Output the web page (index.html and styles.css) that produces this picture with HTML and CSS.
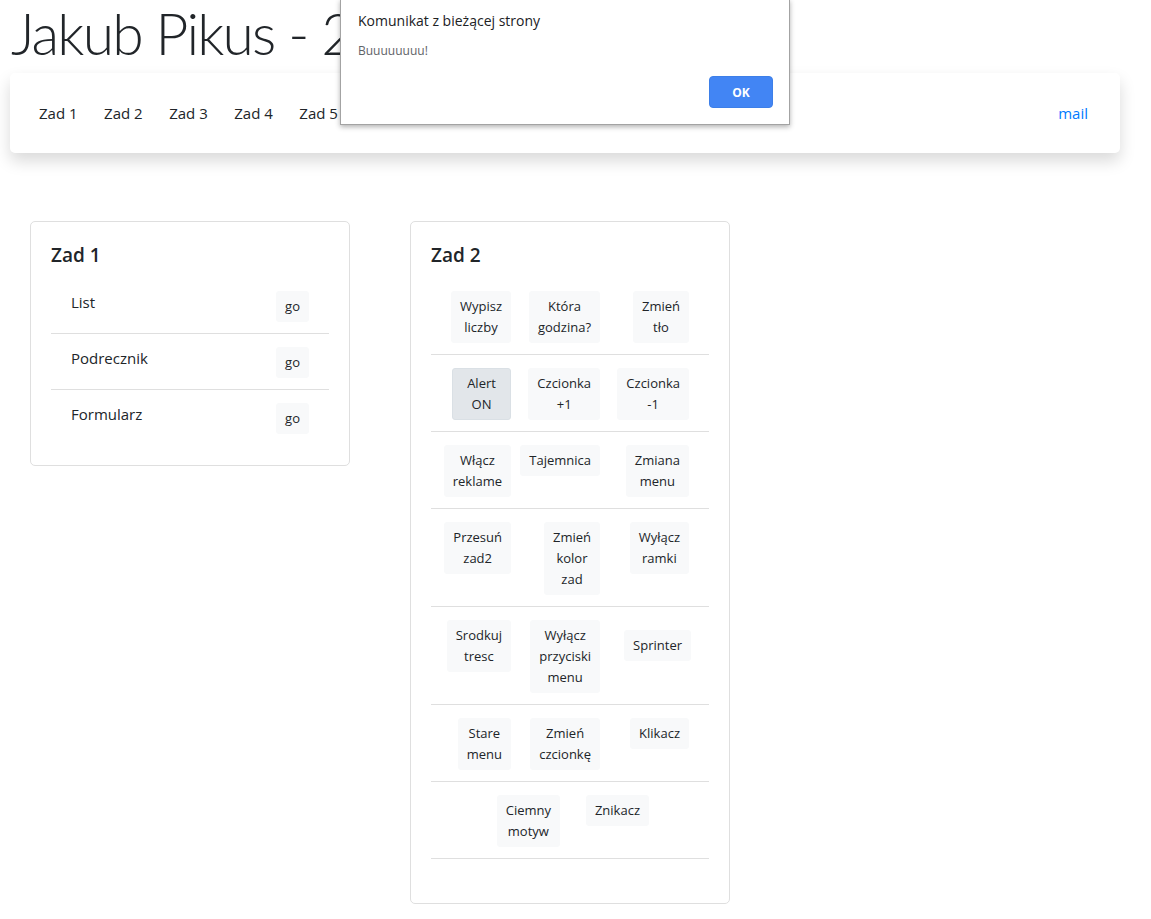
FILE: index.html
```html
<!DOCTYPE html>
<html lang="pl">
<head>
<meta charset="utf-8">
<title>Jakub Pikus</title>
<link rel="stylesheet" href="styles.css">
</head>
<body>
<div class="page">
  <h1 class="title">Jakub Pikus - 2020</h1>
  <nav class="navbar">
    <ul class="nav-list">
      <li><a class="nav-link" href="#">Zad 1</a></li>
      <li><a class="nav-link" href="#">Zad 2</a></li>
      <li><a class="nav-link" href="#">Zad 3</a></li>
      <li><a class="nav-link" href="#">Zad 4</a></li>
      <li><a class="nav-link" href="#">Zad 5</a></li>
      <li><a class="nav-link" href="#">Zad 6</a></li>
      <li><a class="nav-link" href="#">Zad 7</a></li>
    </ul>
    <a class="mail-link" href="#">mail</a>
  </nav>

  <main class="cards">
    <section class="card">
      <h5 class="card-title">Zad 1</h5>
      <ul class="list">
        <li class="list-item row-simple"><span class="item-label">List</span><button class="btn">go</button></li>
        <li class="list-item row-simple"><span class="item-label">Podrecznik</span><button class="btn">go</button></li>
        <li class="list-item row-simple last"><span class="item-label">Formularz</span><button class="btn">go</button></li>
      </ul>
    </section>

    <section class="card">
      <h5 class="card-title">Zad 2</h5>
      <ul class="list list-bordered">
        <li class="list-item btn-grid">
          <button class="btn wrap">Wypisz liczby</button>
          <button class="btn wrap">Która godzina?</button>
          <button class="btn wrap">Zmień tło</button>
        </li>
        <li class="list-item btn-grid">
          <button class="btn wrap active">Alert ON</button>
          <button class="btn wrap">Czcionka +1</button>
          <button class="btn wrap">Czcionka -1</button>
        </li>
        <li class="list-item btn-grid">
          <button class="btn wrap">Włącz reklame</button>
          <button class="btn wrap">Tajemnica</button>
          <button class="btn wrap">Zmiana menu</button>
        </li>
        <li class="list-item btn-grid">
          <button class="btn wrap">Przesuń zad2</button>
          <button class="btn wrap">Zmień kolor zad</button>
          <button class="btn wrap">Wyłącz ramki</button>
        </li>
        <li class="list-item btn-grid">
          <button class="btn wrap">Srodkuj tresc</button>
          <button class="btn wrap">Wyłącz przyciski menu</button>
          <button class="btn wrap btn-offset">Sprinter</button>
        </li>
        <li class="list-item btn-grid">
          <button class="btn wrap">Stare menu</button>
          <button class="btn wrap">Zmień czcionkę</button>
          <button class="btn wrap">Klikacz</button>
        </li>
        <li class="list-item btn-grid duo">
          <button class="btn wrap">Ciemny motyw</button>
          <button class="btn wrap">Znikacz</button>
        </li>
      </ul>
    </section>
  </main>
</div>

<div class="dialog">
  <div class="dialog-title">Komunikat z bieżącej strony</div>
  <div class="dialog-message">Buuuuuuuu!</div>
  <div class="dialog-actions"><button class="dialog-ok">OK</button></div>
</div>
</body>
</html>
```

FILE: styles.css
```css
* { box-sizing: border-box; }

body {
  margin: 0;
  background: #fff;
  color: #212529;
  font-family: "Open Sans", "Noto Sans", "Liberation Sans", sans-serif;
  font-size: 16px;
  line-height: 1.5;
}

.page {
  padding: 3px 0 0 10px;
}

.title {
  margin: 0 0 10px 0;
  padding-left: 1px;
  font-family: "Lato", "Open Sans", sans-serif;
  font-size: 57px;
  font-weight: 300;
  letter-spacing: -1.8px;
  line-height: 60px;
  color: #212529;
  white-space: nowrap;
}

.navbar {
  width: 1110px;
  height: 80px;
  display: flex;
  align-items: center;
  justify-content: space-between;
  padding: 0 32px 0 29px;
  background: #fff;
  border-radius: 5px;
  box-shadow: 0 8px 16px rgba(0, 0, 0, 0.15);
}

.nav-list {
  display: flex;
  gap: 26.5px;
  margin: 0;
  padding: 0;
  list-style: none;
}

.nav-link {
  color: #212529;
  text-decoration: none;
  font-size: 15px;
}

.mail-link {
  color: #007bff;
  text-decoration: none;
  font-size: 15px;
}

.cards {
  display: flex;
  align-items: flex-start;
  gap: 60px;
  margin-top: 68px;
  padding-left: 20px;
}

.card {
  width: 320px;
  padding: 20px;
  border: 1px solid #dfdfdf;
  border-radius: 5px;
  background: #fff;
}

.card-title {
  margin: 1px 0 11px 0;
  font-size: 19px;
  font-weight: 600;
  line-height: 24px;
}

.list {
  margin: 0;
  padding: 0;
  list-style: none;
}

.list-bordered {
  margin-bottom: 24px;
}

.list-item {
  padding: 12px 20px 11px;
  border-bottom: 1px solid #dfdfdf;
}

.list-item.last {
  border-bottom: 0;
}

.row-simple {
  display: flex;
  justify-content: space-between;
  align-items: flex-start;
}

.item-label {
  font-size: 15px;
  line-height: 24px;
}

.btn {
  display: block;
  margin-top: 1px;
  padding: 4px 8px;
  border: 1px solid #f8f9fa;
  border-radius: 3px;
  background: #f8f9fa;
  color: #212529;
  font-family: inherit;
  font-size: 13px;
  line-height: 21px;
  text-align: center;
  cursor: pointer;
}

.btn.wrap {
  width: min-content;
}

.btn.active {
  background: #e2e6ea;
  border-color: #dae0e5;
  min-width: 59px;
}

.btn-grid {
  display: grid;
  grid-template-columns: repeat(3, 89px);
  justify-content: end;
  justify-items: end;
  align-items: start;
}

.btn-grid.duo {
  grid-template-columns: repeat(2, 89px);
  justify-content: center;
  padding-right: 40px;
}

.btn-offset {
  margin-top: 11px;
  margin-right: -2px;
}

/* browser alert dialog overlay */
.dialog {
  position: absolute;
  top: -1px;
  left: 340px;
  width: 450px;
  height: 126px;
  padding: 14px 16px 0 17px;
  background: #fff;
  border: 1px solid #a3a3a3;
  border-top: 0;
  box-shadow: 0 2px 5px rgba(0, 0, 0, 0.3);
  font-family: "Open Sans", "Noto Sans", sans-serif;
}

.dialog-title {
  font-size: 14px;
  line-height: 16px;
  color: #202124;
}

.dialog-message {
  margin-top: 14px;
  font-size: 12px;
  line-height: 16px;
  color: #5f6368;
}

.dialog-actions {
  display: flex;
  justify-content: flex-end;
  margin-top: 17px;
}

.dialog-ok {
  width: 64px;
  height: 32px;
  border: 1px solid #3d7fe8;
  border-radius: 4px;
  background: #4285f4;
  color: #fff;
  font-family: inherit;
  font-size: 12px;
  font-weight: 700;
}
```
